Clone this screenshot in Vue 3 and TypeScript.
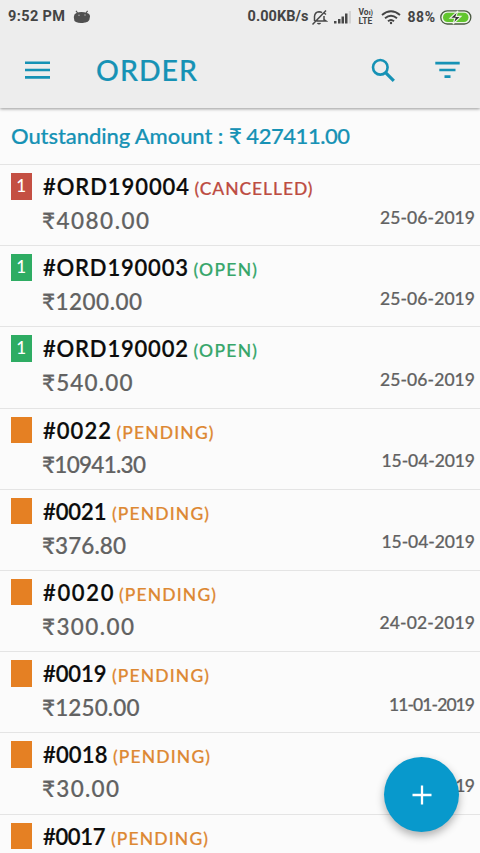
<script setup lang="ts">
type Status = 'CANCELLED' | 'OPEN' | 'PENDING'

interface Order {
  id: string
  idWidth: number
  status: Status
  amount?: string
  amountWidth?: number
  date?: string
  dateWidth?: number
  count?: number
}

const statusWidth: Record<Status, number> = { CANCELLED: 118, OPEN: 63.5, PENDING: 97 }

const orders: Order[] = [
  { id: '#ORD190004', idWidth: 146, status: 'CANCELLED', amount: '₹4080.00', amountWidth: 107, date: '25-06-2019', dateWidth: 95, count: 1 },
  { id: '#ORD190003', idWidth: 145, status: 'OPEN', amount: '₹1200.00', amountWidth: 100, date: '25-06-2019', dateWidth: 95, count: 1 },
  { id: '#ORD190002', idWidth: 145, status: 'OPEN', amount: '₹540.00', amountWidth: 90.5, date: '25-06-2019', dateWidth: 95, count: 1 },
  { id: '#0022', idWidth: 68, status: 'PENDING', amount: '₹10941.30', amountWidth: 104, date: '15-04-2019', dateWidth: 93.5 },
  { id: '#0021', idWidth: 63.5, status: 'PENDING', amount: '₹376.80', amountWidth: 84, date: '15-04-2019', dateWidth: 93.5 },
  { id: '#0020', idWidth: 70.5, status: 'PENDING', amount: '₹300.00', amountWidth: 92, date: '24-02-2019', dateWidth: 95.5 },
  { id: '#0019', idWidth: 63.5, status: 'PENDING', amount: '₹1250.00', amountWidth: 97.5, date: '11-01-2019', dateWidth: 86 },
  { id: '#0018', idWidth: 64.5, status: 'PENDING', amount: '₹30.00', amountWidth: 77, date: '10-01-2019', dateWidth: 89 },
  { id: '#0017', idWidth: 62.5, status: 'PENDING' },
]

const ctx = document.createElement('canvas').getContext('2d')!

// Spreads a text over a given width by letter spacing.
function fit(text: string, size: number, weight: number, width: number, family = 'Lato, "Noto Sans"') {
  ctx.font = `${weight} ${size}px ${family}, sans-serif`
  const spacing = (width - ctx.measureText(text).width) / (text.length - 1)
  return { width: `${width}px`, letterSpacing: `${spacing.toFixed(3)}px` }
}
</script>

<template>
  <div class="screen">
    <header class="top">
      <div class="statusbar">
        <span class="clock" :style="fit('9:52 PM', 14.5, 700, 57, 'Roboto')">9:52 PM</span>
        <svg class="droid" width="18" height="14" viewBox="0 0 18 14">
          <path d="M3 .8 4.600 3M14.600.8 13 3" stroke="#555" stroke-width="1.2" />
          <path d="M3 3.200Q8 1 14 3q3 .6 3 3.400L16.300 10Q15 12.600 12 12.400 7 13.800 3 12 .8 11 1 8.500L.8 7Q1 4 3 3.200z" fill="#505050" />
          <circle cx="6" cy="5.200" r=".7" fill="#bbb" /><circle cx="12" cy="5" r=".7" fill="#bbb" />
        </svg>
        <span class="speed" :style="fit('0.00KB/s', 14.5, 700, 61, 'Roboto')">0.00KB/s</span>
        <svg class="bell" width="17" height="17" viewBox="0 0 17 17" fill="none" stroke="#484848" stroke-width="1.500">
          <path d="M3.500 12V7.500Q3.800 3 8 2.700q1.800 0 3 1M13 7v3.500l2 1.500H5.500M1.500 15.500 15 1.500M6.500 14q1.500 1.500 3 0M12.500 3.500l2.500 2" />
        </svg>
        <svg class="signal" width="18" height="13" viewBox="0 0 18 13" fill="#484848">
          <path d="M0 10h2.500v2.500H0zM4 8h2.500v4.500H4zM7.500 5.500H10v7H7.500zM11 2.500h2.500v10H11z" />
          <path d="M14.800 0H17v12.500h-2.200z" fill="#d2d2d2" />
        </svg>
        <span class="volte"><span>Vo<i>ı)</i></span><span>LTE</span></span>
        <svg class="wifi" width="20" height="15" viewBox="0 0 20 15" fill="none" stroke="#444" stroke-width="1.900">
          <path d="M1 5Q10-2.500 19 5M4 8.200q6-5 12 0M7 11.200q3-2.500 6 0" />
          <circle cx="10" cy="13" r="1.200" fill="#444" stroke="none" />
        </svg>
        <span class="percent" :style="fit('88%', 14, 700, 27.5, 'Roboto')">88%</span>
        <svg class="battery" width="32" height="15" viewBox="0 0 32 15">
          <rect x=".8" y=".8" width="30" height="13.200" rx="6.500" fill="#eef5e8" stroke="#4b5a42" stroke-width="1.300" />
          <rect x="3" y="2.800" width="25.500" height="9.200" rx="4.500" fill="#62c62e" />
          <path d="m18 .8-8 7.500h5L13 14l8-7.600h-5z" fill="#333" stroke="#eef5e8" stroke-width="1.100" />
        </svg>
      </div>
      <div class="toolbar">
        <svg class="menu" width="26" height="20" viewBox="0 0 26 20">
          <path d="M0 2.700h25M0 10h25M0 17.400h25" stroke="#1692b5" stroke-width="2.600" />
        </svg>
        <h1 class="title" :style="fit('ORDER', 28.5, 500, 101)">ORDER</h1>
        <svg class="search" width="25" height="25" viewBox="0 0 25 25" fill="none" stroke="#1692b5">
          <circle cx="9.300" cy="9.300" r="7.300" stroke-width="2.600" />
          <path d="m14.600 14.600 8.200 8.200" stroke-width="3.200" />
        </svg>
        <svg class="filter" width="25" height="18" viewBox="0 0 25 18">
          <path d="M.3 2.200h24.400M4.300 9h16.200M9.500 15.600h6" stroke="#1692b5" stroke-width="2.700" />
        </svg>
      </div>
    </header>

    <div class="outstanding">
      <span :style="fit('Outstanding Amount :', 22, 500, 213)">Outstanding Amount :</span>
      <span :style="fit('₹ 427411.00', 22, 500, 121)">₹ 427411.00</span>
    </div>

    <main class="list">
      <article v-for="order in orders" :key="order.id" class="order" :class="order.status.toLowerCase()">
        <span class="badge">{{ order.count }}</span>
        <div class="body">
          <div class="heading">
            <span class="id" :style="fit(order.id, 22, 600, order.idWidth)">{{ order.id }}</span>
            <span class="state" :style="fit(`(${order.status})`, 17.5, 500, statusWidth[order.status])">({{ order.status }})</span>
          </div>
          <div v-if="order.amount && order.date" class="details">
            <span class="amount" :style="fit(order.amount, 22.5, 500, order.amountWidth ?? 90)">{{ order.amount }}</span>
            <span class="date" :style="fit(order.date, 17.5, 500, order.dateWidth ?? 94)">{{ order.date }}</span>
          </div>
        </div>
      </article>
    </main>

    <button class="fab" aria-label="Add order">
      <svg width="20" height="20" viewBox="0 0 20 20"><path d="M10 .5v19M.5 10h19" stroke="#fff" stroke-width="2.300" /></svg>
    </button>
  </div>
</template>

<style>
body {
  margin: 0;
  overflow: hidden;
}
</style>

<style scoped>
.screen {
  position: relative;
  display: flex;
  flex-direction: column;
  width: 480px;
  height: 853px;
  overflow: hidden;
  background: #fbfbfb;
  font-family: Lato, "Noto Sans", sans-serif;
  font-weight: 500;
  white-space: nowrap;
  -webkit-text-stroke: 0.2px currentColor;
}
.top {
  flex: none;
  height: 108px;
  background: #ededed;
  box-shadow: 0 1px 3px rgba(0, 0, 0, 0.4);
  z-index: 1;
}
.statusbar {
  display: flex;
  align-items: center;
  height: 34px;
  padding: 0 8px;
  font: 700 14px/34px Roboto, sans-serif;
  color: #444;
  -webkit-text-stroke: 0;
}
.statusbar > * {
  flex: none;
}
.clock,
.speed {
  font-size: 14.5px;
}
.droid {
  margin-left: 8px;
}
.speed {
  margin-left: auto;
}
.bell {
  margin-left: 2px;
}
.signal {
  margin-left: 6px;
}
.volte {
  display: flex;
  flex-direction: column;
  width: 16px;
  margin-left: 7px;
  font-size: 8.5px;
  line-height: 7.5px;
}
.volte i {
  font-style: normal;
  font-size: 7px;
}
.wifi {
  margin-left: 6px;
}
.percent {
  margin-left: 7px;
}
.battery {
  margin-left: 5px;
}
.toolbar {
  display: flex;
  align-items: center;
  height: 72px;
  padding: 0 20px 0 25px;
}
.title {
  margin: -1px 0 0 45px;
  font-size: 28.5px;
  font-weight: 500;
  line-height: 72px;
  color: #1692b5;
}
.search {
  margin-left: auto;
}
.filter {
  margin-left: 39px;
}
.outstanding {
  flex: none;
  display: flex;
  gap: 5px;
  height: 56px;
  padding-left: 11px;
  font-size: 22px;
  line-height: 56px;
  color: #1692b5;
}
.order {
  display: flex;
  box-sizing: border-box;
  height: 81.2px;
  padding: 8px 5px 0 10.5px;
  border-top: 1px solid #e4e4e4;
}
.badge {
  flex: none;
  width: 21.5px;
  height: 26.5px;
  margin-right: 11px;
  font-size: 17px;
  line-height: 26px;
  text-align: center;
  color: #fff;
  -webkit-text-stroke: 0;
}
.body {
  flex: 1;
}
.heading {
  display: flex;
  gap: 5.5px;
  align-items: baseline;
  height: 34px;
  line-height: 27.5px;
}
.id {
  font-size: 22px;
  font-weight: 600;
  color: #0c0c0c;
}
.state {
  font-size: 17.5px;
}
.details {
  display: flex;
  justify-content: space-between;
  line-height: 27.5px;
}
.amount {
  margin-left: -1px;
  font-size: 22.5px;
  color: #626262;
}
.date {
  margin-top: -3.5px;
  font-size: 17.5px;
  color: #626262;
}
.cancelled .badge {
  background: #c44f43;
}
.cancelled .state {
  color: #bd4c42;
}
.open .badge {
  background: #2eac63;
}
.open .state {
  color: #36a66a;
}
.pending .badge {
  background: #e58023;
}
.pending .state {
  color: #dd8833;
}
.fab {
  position: absolute;
  left: 384px;
  top: 757px;
  display: grid;
  place-items: center;
  width: 75px;
  height: 75px;
  padding: 0;
  border: 0;
  border-radius: 50%;
  background: #0899cc;
  box-shadow: 0 4px 8px rgba(0, 0, 0, 0.3);
  z-index: 2;
}
</style>
